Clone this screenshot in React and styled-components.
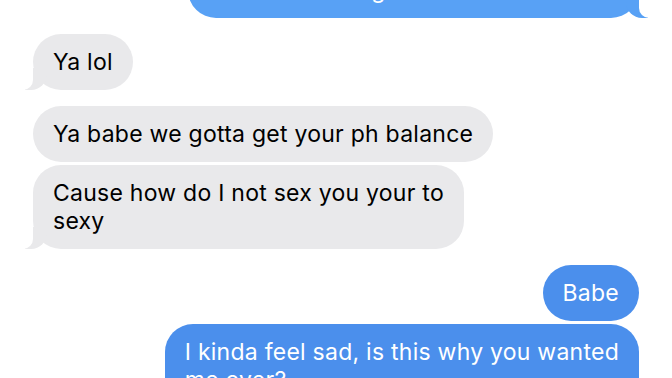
import React from 'react';
import styled, { createGlobalStyle, css } from 'styled-components';

const GlobalStyle = createGlobalStyle`
  html, body {
    margin: 0;
    padding: 0;
    background: #ffffff;
  }
  body {
    font-family: 'Inter', 'Roboto', 'Liberation Sans', sans-serif;
    -webkit-font-smoothing: antialiased;
  }
`;

const COLORS = {
  gray: '#e9e9eb',
  blueLight: '#58a1f5',
  blue: '#4b8fec',
};

const Screen = styled.div`
  width: 100%;
  height: 100vh;
  overflow: hidden;
  background: #ffffff;
`;

const Thread = styled.div`
  display: flex;
  flex-direction: column;
  gap: 16px;
  padding: 0 33px;
  margin-top: -66px;
`;

const Group = styled.div`
  display: flex;
  flex-direction: column;
  gap: 3px;
  align-items: ${({ mine }) => (mine ? 'flex-end' : 'flex-start')};
`;

const tailLeft = css`
  &::before {
    content: '';
    position: absolute;
    bottom: 0;
    left: -8px;
    width: 22px;
    height: 22px;
    background: ${COLORS.gray};
    border-bottom-right-radius: 16px;
  }
  &::after {
    content: '';
    position: absolute;
    bottom: 0;
    left: -12px;
    width: 12px;
    height: 22px;
    background: #ffffff;
    border-bottom-right-radius: 10px;
  }
`;

const tailRight = css`
  &::before {
    content: '';
    position: absolute;
    bottom: 0;
    right: -9px;
    width: 22px;
    height: 22px;
    background: ${({ tone }) => tone};
    border-bottom-left-radius: 16px;
  }
  &::after {
    content: '';
    position: absolute;
    bottom: 0;
    right: -13px;
    width: 13px;
    height: 22px;
    background: #ffffff;
    border-bottom-left-radius: 10px;
  }
`;

const Bubble = styled.div`
  position: relative;
  padding: 14px 20px;
  border-radius: 28px;
  font-size: 23px;
  letter-spacing: 0.25px;
  line-height: 28px;
  white-space: nowrap;
  background: ${({ tone }) => tone};
  color: ${({ mine }) => (mine ? '#ffffff' : '#000000')};
  ${({ tail, mine }) => tail && (mine ? tailRight : tailLeft)}
`;

const Text = styled.span`
  position: relative;
  z-index: 1;
`;

const groups = [
  {
    mine: true,
    tone: COLORS.blueLight,
    messages: [['Thats what the doctor told me at first', 'she said its all good']],
  },
  { mine: false, tone: COLORS.gray, messages: [['Ya lol']] },
  {
    mine: false,
    tone: COLORS.gray,
    messages: [
      ['Ya babe we gotta get your ph balance'],
      ['Cause how do I not sex you your to', 'sexy'],
    ],
  },
  {
    mine: true,
    tone: COLORS.blue,
    messages: [['Babe'], ['I kinda feel sad, is this why you wanted', 'me over?']],
  },
];

export default function App() {
  return (
    <Screen>
      <GlobalStyle />
      <Thread>
        {groups.map((g, gi) => (
          <Group key={gi} mine={g.mine}>
            {g.messages.map((lines, mi) => (
              <Bubble
                key={mi}
                mine={g.mine}
                tone={g.tone}
                tail={mi === g.messages.length - 1}
              >
                <Text>
                  {lines.map((l, li) => (
                    <React.Fragment key={li}>
                      {li > 0 && <br />}
                      {l}
                    </React.Fragment>
                  ))}
                </Text>
              </Bubble>
            ))}
          </Group>
        ))}
      </Thread>
    </Screen>
  );
}
